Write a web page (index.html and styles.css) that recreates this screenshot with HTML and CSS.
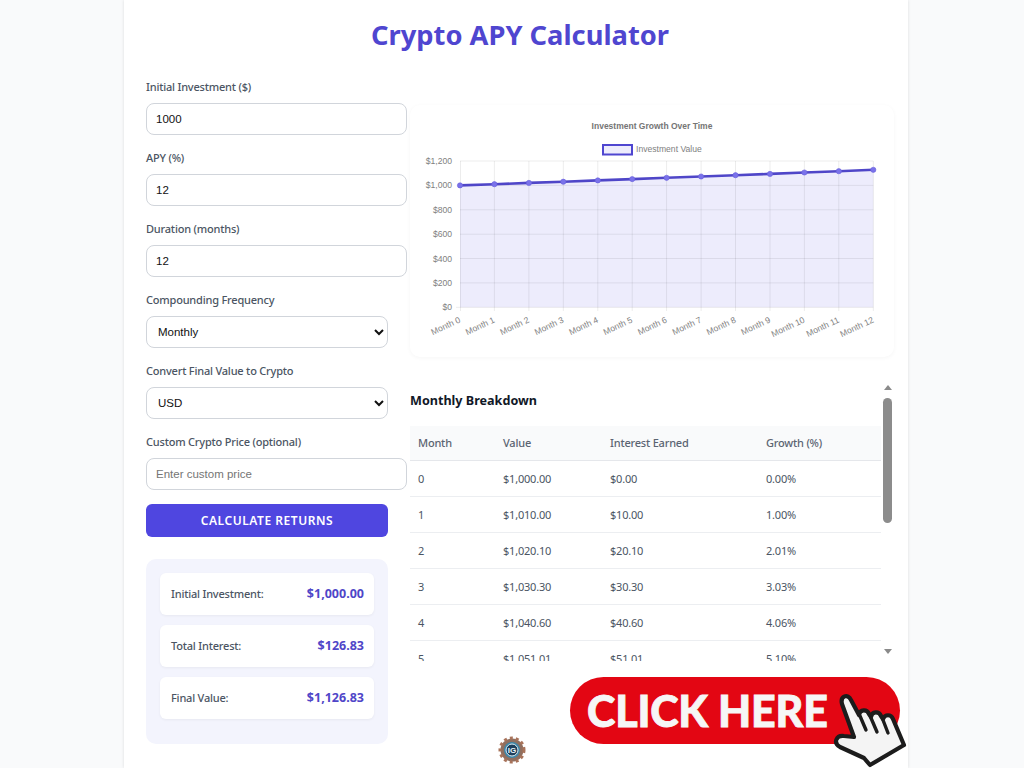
FILE: index.html
```html
<!DOCTYPE html>
<html lang="en">
<head>
<meta charset="utf-8">
<title>Crypto APY Calculator</title>
<link rel="stylesheet" href="styles.css">
</head>
<body>
<main class="app">
  <h1 class="title">Crypto APY Calculator</h1>
  <div class="layout">
    <section class="controls">
      <div class="field"><label class="label">Initial Investment ($)</label><input class="input" type="text" value="1000"></div>
      <div class="field"><label class="label">APY (%)</label><input class="input" type="text" value="12"></div>
      <div class="field"><label class="label">Duration (months)</label><input class="input" type="text" value="12"></div>
      <div class="field"><label class="label">Compounding Frequency</label><select class="select"><option>Monthly</option></select></div>
      <div class="field"><label class="label">Convert Final Value to Crypto</label><select class="select"><option>USD</option></select></div>
      <div class="field"><label class="label">Custom Crypto Price (optional)</label><input class="input" type="text" placeholder="Enter custom price"></div>
      <button class="calc" type="button">CALCULATE RETURNS</button>
      <div class="results">
        <div class="result"><span class="result-name">Initial Investment:</span><span class="result-value">$1,000.00</span></div>
        <div class="result"><span class="result-name">Total Interest:</span><span class="result-value">$126.83</span></div>
        <div class="result"><span class="result-name">Final Value:</span><span class="result-value">$1,126.83</span></div>
      </div>
    </section>
    <section class="output">
      <div class="chart-card">
        <svg class="chart" viewBox="410 105 484 252" width="484" height="252" aria-label="Investment Growth Over Time">
          <text class="c-title" x="652" y="129" text-anchor="middle">Investment Growth Over Time</text>
          <rect class="c-legend" x="603" y="145" width="29" height="9.5"/>
          <text class="c-text" x="636" y="152">Investment Value</text>
          <polygon class="c-area" points="460,185.4 494.4,184.2 528.9,182.9 563.3,181.7 597.8,180.4 632.2,179.1 666.6,177.8 701.1,176.5 735.5,175.2 770,173.9 804.4,172.5 838.8,171.2 873.3,169.8 873.3,307.3 460,307.3"/>
          <g class="c-grid">
            <path d="M460 161H873.3M460 185.4H873.3M460 209.8H873.3M460 234.2H873.3M460 258.5H873.3M460 282.9H873.3M456 307.3H873.3"/>
            <path d="M460.5 161V311M494.4 161V311M528.9 161V311M563.3 161V311M597.8 161V311M632.2 161V311M666.6 161V311M701.1 161V311M735.5 161V311M770 161V311M804.4 161V311M838.8 161V311M873.3 161V311"/>
          </g>
          <polyline class="c-line" points="460,185.4 494.4,184.2 528.9,182.9 563.3,181.7 597.8,180.4 632.2,179.1 666.6,177.8 701.1,176.5 735.5,175.2 770,173.9 804.4,172.5 838.8,171.2 873.3,169.8"/>
          <g class="c-dots">
            <circle cx="460" cy="185.4" r="2.6"/><circle cx="494.4" cy="184.2" r="2.6"/><circle cx="528.9" cy="182.9" r="2.6"/><circle cx="563.3" cy="181.7" r="2.6"/><circle cx="597.8" cy="180.4" r="2.6"/><circle cx="632.2" cy="179.1" r="2.6"/><circle cx="666.6" cy="177.8" r="2.6"/><circle cx="701.1" cy="176.5" r="2.6"/><circle cx="735.5" cy="175.2" r="2.6"/><circle cx="770" cy="173.9" r="2.6"/><circle cx="804.4" cy="172.5" r="2.6"/><circle cx="838.8" cy="171.2" r="2.6"/><circle cx="873.3" cy="169.8" r="2.6"/>
          </g>
          <g class="c-text c-end">
            <text x="452" y="164">$1,200</text><text x="452" y="188.4">$1,000</text><text x="452" y="212.8">$800</text><text x="452" y="237.2">$600</text><text x="452" y="261.5">$400</text><text x="452" y="285.9">$200</text><text x="452" y="310.3">$0</text>
          </g>
          <g class="c-text c-end">
            <text transform="translate(461 322) rotate(-25)">Month 0</text>
            <text transform="translate(495.4 322) rotate(-25)">Month 1</text>
            <text transform="translate(529.9 322) rotate(-25)">Month 2</text>
            <text transform="translate(564.3 322) rotate(-25)">Month 3</text>
            <text transform="translate(598.8 322) rotate(-25)">Month 4</text>
            <text transform="translate(633.2 322) rotate(-25)">Month 5</text>
            <text transform="translate(667.6 322) rotate(-25)">Month 6</text>
            <text transform="translate(702.1 322) rotate(-25)">Month 7</text>
            <text transform="translate(736.5 322) rotate(-25)">Month 8</text>
            <text transform="translate(771 322) rotate(-25)">Month 9</text>
            <text transform="translate(805.4 322) rotate(-25)">Month 10</text>
            <text transform="translate(839.8 322) rotate(-25)">Month 11</text>
            <text transform="translate(874.3 322) rotate(-25)">Month 12</text>
          </g>
        </svg>
      </div>
      <div class="breakdown">
        <div class="breakdown-body">
          <h2 class="breakdown-title">Monthly Breakdown</h2>
          <table class="table">
            <thead><tr><th class="col-month">Month</th><th class="col-value">Value</th><th class="col-interest">Interest Earned</th><th>Growth (%)</th></tr></thead>
            <tbody>
              <tr><td>0</td><td>$1,000.00</td><td>$0.00</td><td>0.00%</td></tr>
              <tr><td>1</td><td>$1,010.00</td><td>$10.00</td><td>1.00%</td></tr>
              <tr><td>2</td><td>$1,020.10</td><td>$20.10</td><td>2.01%</td></tr>
              <tr><td>3</td><td>$1,030.30</td><td>$30.30</td><td>3.03%</td></tr>
              <tr><td>4</td><td>$1,040.60</td><td>$40.60</td><td>4.06%</td></tr>
              <tr><td>5</td><td>$1,051.01</td><td>$51.01</td><td>5.10%</td></tr>
            </tbody>
          </table>
        </div>
        <div class="scrollbar" aria-hidden="true">
          <span class="arrow arrow-up"></span>
          <span class="thumb"></span>
          <span class="arrow arrow-down"></span>
        </div>
      </div>
    </section>
  </div>
</main>

<a class="cta" href="#"><span class="cta-text">CLICK HERE</span></a>
<svg class="cta-hand" viewBox="0 0 100 88" width="100" height="88" aria-hidden="true">
  <path class="hand-body" d="M22 24C20 16 28 13 31 20L39 35C40 29 47 29 49 34L51 37C52 31 59 31 61 36L63 39C65 34 71 34 73 39L84 65L50 85L44 78L20 67C13 63 16 55 24 56L34 57Z"/>
  <path class="hand-line" d="M40 36L46 50M51 38L57 52M63 40L68 53"/>
</svg>
<svg class="badge" viewBox="0 0 28 28" width="28" height="28" aria-hidden="true">
  <circle class="badge-gear" cx="14" cy="14" r="11.5"/>
  <circle class="badge-teeth" cx="14" cy="14" r="12"/>
  <circle class="badge-ring" cx="14" cy="14" r="8"/>
  <circle class="badge-core" cx="14" cy="14" r="6"/>
  <text class="badge-text" x="14" y="17" text-anchor="middle">IG</text>
</svg>
</body>
</html>
```

FILE: styles.css
```css
* { box-sizing: border-box; }
html, body { margin: 0; height: 768px; overflow: hidden; }
body {
  position: relative;
  background: #f9fafb;
  font-family: "Noto Sans", "Open Sans", sans-serif;
  color: #1f2937;
}
.app {
  width: 784px;
  height: 768px;
  margin-left: 124px;
  padding: 0 14px 0 22px;
  background: #fff;
  box-shadow: 0 0 3px rgba(0, 0, 0, .12);
}
.title {
  margin: 0;
  padding-top: 17px;
  height: 77px;
  line-height: 36px;
  font-size: 27.3px;
  font-weight: 700;
  text-align: center;
  color: #4f46d0;
}
.layout { display: flex; gap: 22px; }
.controls { width: 242px; flex: none; }
.output { width: 484px; flex: none; padding-top: 28px; }

.field { margin-bottom: 13.1px; }
.label {
  display: block;
  height: 20px;
  margin-bottom: 5.5px;
  line-height: 20px;
  font-size: 11px;
  letter-spacing: -.2px;
  font-weight: 500;
  color: #4b5563;
  white-space: nowrap;
}
.input, .select {
  display: block;
  height: 32.5px;
  border: 1px solid #d1d5db;
  border-radius: 8px;
  background: #fff;
  font-family: "Liberation Sans", Arial, sans-serif;
  font-size: 11.5px;
  color: #111;
}
.input { width: 261px; padding: 0 9px; }
.input::placeholder { color: #757575; }
.select { width: 242px; padding: 0 7px; }
.calc {
  display: block;
  width: 100%;
  height: 33.5px;
  border: 0;
  border-radius: 6px;
  background: #4f46e0;
  color: #fff;
  font-family: "Noto Sans", sans-serif;
  font-size: 12px;
  font-weight: 600;
  letter-spacing: .55px;
}
.results {
  display: flex;
  flex-direction: column;
  gap: 10px;
  height: 185px;
  margin-top: 22px;
  padding: 14px;
  border-radius: 10px;
  background: #f3f4fd;
}
.result {
  display: flex;
  align-items: center;
  justify-content: space-between;
  height: 42px;
  padding: 0 10px 2px 11px;
  border-radius: 6px;
  background: #fff;
  box-shadow: 0 1px 3px rgba(0, 0, 0, .05);
}
.result-name { font-size: 11px; letter-spacing: -.2px; font-weight: 500; color: #4b5563; }
.result-value { font-size: 12.5px; font-weight: 700; color: #4f46c8; }

.chart-card {
  height: 252px;
  border-radius: 10px;
  background: #fff;
  box-shadow: 0 1px 4px rgba(0, 0, 0, .04);
}
.chart { display: block; font-family: "Liberation Sans", Arial, sans-serif; }
.c-title { font-size: 8.5px; font-weight: 700; fill: #757575; }
.c-text { font-size: 8.6px; fill: #808080; }
.c-end { text-anchor: end; }
.c-legend { fill: rgba(79, 70, 229, .1); stroke: #4f46d0; stroke-width: 2; }
.c-area { fill: rgba(79, 70, 229, .1); }
.c-grid { fill: none; stroke: rgba(0, 0, 0, .075); stroke-width: 1; }
.c-line { fill: none; stroke: #4f46c8; stroke-width: 2.6; }
.c-dots { fill: #7a72ea; stroke: #6a62dc; stroke-width: .6; }

.breakdown {
  display: flex;
  height: 281px;
  margin-top: 23px;
}
.breakdown-body { width: 471px; flex: none; overflow: hidden; }
.scrollbar {
  display: flex;
  flex: none;
  flex-direction: column;
  align-items: center;
  justify-content: space-between;
  width: 13px;
  padding: 5px 0 7px;
}
.thumb {
  width: 9px;
  height: 125px;
  margin-bottom: auto;
  margin-top: 8px;
  border-radius: 5px;
  background: #8c8c8c;
}
.arrow { width: 0; height: 0; border: solid transparent; border-width: 0 4px; }
.arrow-up { border-bottom: 5px solid #8a8a8a; }
.arrow-down { border-top: 5px solid #8a8a8a; }
.breakdown-title {
  margin: 0;
  height: 46px;
  padding-top: 11px;
  line-height: 20px;
  font-size: 12.6px;
  font-weight: 700;
  color: #111827;
}
.table {
  width: 471px;
  table-layout: fixed;
  border-collapse: collapse;
  font-size: 11px;
  letter-spacing: -.2px;
  color: #4b5563;
}
.table th {
  height: 34px;
  padding: 0 8px;
  background: #f9fafb;
  border-bottom: 1px solid #e5e7eb;
  font-weight: 500;
  text-align: left;
  color: #5b6472;
}
.table td {
  height: 36px;
  padding: 0 8px;
  border-bottom: 1px solid #eceef1;
}
.col-month { width: 85px; }
.col-value { width: 107px; }
.col-interest { width: 156px; }

.cta {
  position: absolute;
  left: 570px;
  top: 677px;
  display: flex;
  align-items: center;
  width: 330px;
  height: 67px;
  padding-left: 17px;
  border-radius: 34px;
  background: #e30613;
  text-decoration: none;
}
.cta-text {
  font-family: Lato, "Noto Sans", sans-serif;
  font-size: 43px;
  letter-spacing: -.2px;
  font-weight: 900;
  line-height: 1;
  color: #f6f6f6;
  -webkit-text-stroke: .8px #f6f6f6;
  white-space: nowrap;
}
.cta-hand { position: absolute; left: 820px; top: 680px; }
.hand-body { fill: #f4f4f4; stroke: #1c1c1c; stroke-width: 4.2; stroke-linejoin: round; }
.hand-line { fill: none; stroke: #1c1c1c; stroke-width: 3.4; stroke-linecap: round; }
.badge { position: absolute; left: 498px; top: 736px; }
.badge-gear { fill: #8f6f60; }
.badge-teeth { fill: none; stroke: #a8735a; stroke-width: 3; stroke-dasharray: 3 3; }
.badge-ring { fill: #3f87a8; }
.badge-core { fill: #1d3f5c; stroke: #dcecf4; stroke-width: 1; }
.badge-text { font-family: "Liberation Sans", sans-serif; font-size: 8px; font-weight: 700; fill: #eef6fa; }
```
